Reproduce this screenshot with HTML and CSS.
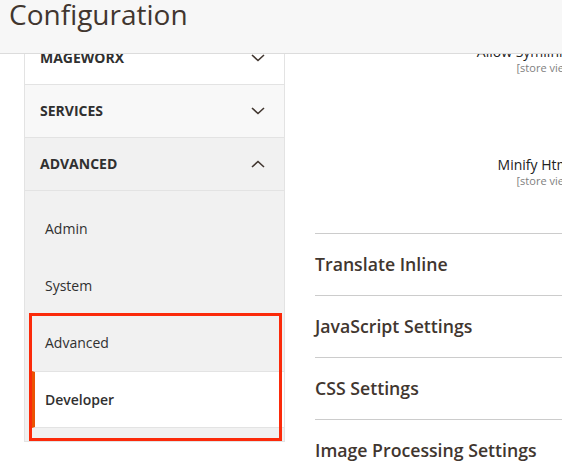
FILE: index.html
```html
<!DOCTYPE html>
<html lang="en">
<head>
<meta charset="utf-8">
<title>Configuration</title>
<link rel="stylesheet" href="styles.css">
</head>
<body>
<header class="page-header">
  <h1 class="page-title">Configuration</h1>
</header>
<div class="viewport">
  <div class="layout">
    <nav class="side-nav">
      <div class="nav-group nav-group-white">
        <span class="nav-title">Mageworx</span>
        <svg class="chev" width="14" height="8" viewBox="0 0 14 8"><path d="M1 1 L7 6.5 L13 1" fill="none" stroke="#41362f" stroke-width="1.6"/></svg>
      </div>
      <div class="nav-group nav-group-light">
        <span class="nav-title">Services</span>
        <svg class="chev" width="14" height="8" viewBox="0 0 14 8"><path d="M1 1 L7 6.5 L13 1" fill="none" stroke="#41362f" stroke-width="1.6"/></svg>
      </div>
      <div class="nav-group nav-group-open">
        <span class="nav-title">Advanced</span>
        <svg class="chev" width="14" height="8" viewBox="0 0 14 8"><path d="M1 7 L7 1.5 L13 7" fill="none" stroke="#41362f" stroke-width="1.6"/></svg>
      </div>
      <ul class="nav-items">
        <li class="nav-item">Admin</li>
        <li class="nav-item">System</li>
        <li class="nav-item">Advanced</li>
        <li class="nav-item nav-item-active">Developer</li>
      </ul>
      <div class="highlight-box"></div>
    </nav>
    <main class="main">
      <div class="field field-tall">
        <div class="field-label">Allow Symlinks</div>
        <div class="field-scope">[store view]</div>
      </div>
      <div class="field field-short">
        <div class="field-label">Minify Html</div>
        <div class="field-scope">[store view]</div>
      </div>
      <div class="section">Translate Inline</div>
      <div class="section">JavaScript Settings</div>
      <div class="section">CSS Settings</div>
      <div class="section">Image Processing Settings</div>
    </main>
  </div>
</div>
</body>
</html>
```

FILE: styles.css
```css
html, body {
  margin: 0;
  padding: 0;
  width: 562px;
  height: 470px;
  overflow: hidden;
  background: #fff;
  font-family: "Open Sans", "Liberation Sans", sans-serif;
  color: #303030;
}

.page-header {
  height: 53px;
  background: #f7f7f7;
  border-bottom: 1px solid #dcdcdc;
  overflow: hidden;
  position: relative;
  z-index: 2;
}

.page-title {
  margin: 0;
  padding-left: 9px;
  font-size: 28px;
  font-weight: 400;
  line-height: 28px;
  color: #41362f;
  white-space: nowrap;
}

.viewport {
  height: 416px;
  overflow: hidden;
}

.layout {
  display: flex;
  align-items: flex-start;
  margin-top: -22px;
}

.side-nav {
  position: relative;
  margin-left: 24px;
  width: 259px;
  flex: 0 0 259px;
  border-left: 1px solid #e3e3e3;
  border-right: 1px solid #e3e3e3;
  border-bottom: 1px solid #e3e3e3;
}

.nav-group {
  height: 52px;
  border-bottom: 1px solid #e3e3e3;
  display: flex;
  align-items: center;
  justify-content: space-between;
  padding: 0 19px 0 15px;
}

.nav-group-white { background: #fff; }
.nav-group-light { background: #f8f8f8; }
.nav-group-open { background: #f1f1f1; }

.nav-title {
  font-size: 14px;
  font-weight: 700;
  text-transform: uppercase;
  color: #303030;
  line-height: 52px;
}

.chev {
  display: block;
}

.nav-items {
  list-style: none;
  margin: 0;
  padding: 9px 0 13px 0;
  background: #f1f1f1;
}

.nav-item {
  margin-left: 7px;
  border-left: 3px solid transparent;
  border-top: 1px solid transparent;
  border-bottom: 1px solid transparent;
  padding-left: 10px;
  height: 55px;
  line-height: 55px;
  font-size: 14px;
  color: #303030;
}

.nav-item-active {
  background: #fff;
  border-left-color: #eb5202;
  border-top-color: #e3e3e3;
  border-bottom-color: #e3e3e3;
  font-weight: 600;
}

.highlight-box {
  position: absolute;
  left: 4px;
  top: 281px;
  width: 247px;
  height: 122px;
  border: 3px solid #fb2a0a;
  pointer-events: none;
}

.main {
  margin-left: 30px;
  flex: 0 0 400px;
  padding-top: 11px;
}

.field {
  width: 258px;
  text-align: right;
  white-space: nowrap;
}

.field-tall { height: 113px; }
.field-short { height: 77px; }

.field-label {
  font-size: 14px;
  line-height: 17px;
  color: #222222;
}

.field-scope {
  font-size: 11px;
  line-height: 15px;
  color: #808080;
  margin-right: -3px;
}

.section {
  border-top: 1px solid #cccccc;
  height: 61px;
  line-height: 61px;
  font-size: 17.7px;
  font-weight: 600;
  color: #41362f;
  white-space: nowrap;
}
```
